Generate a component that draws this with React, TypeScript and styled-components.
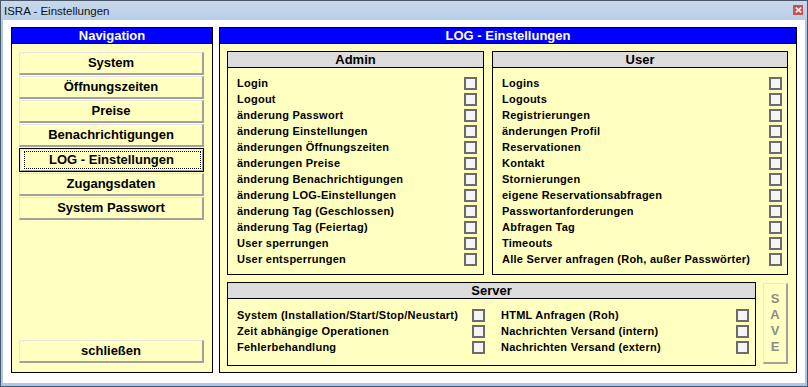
import React from "react";
import styled, { createGlobalStyle, css } from "styled-components";

const Global = createGlobalStyle`
  html, body { margin: 0; padding: 0; background: #fff; }
  body { font-family: "Liberation Sans", Arial, sans-serif; }
  * { box-sizing: border-box; }
`;

const YELLOW = "#ffffc0";

const Window = styled.div`
  width: 808px;
  height: 387px;
  border: 1px solid #48576a;
  display: flex;
  flex-direction: column;
  background: #a8c7ea;
`;

const TitleBar = styled.div`
  height: 19px;
  flex: none;
  display: flex;
  align-items: center;
  padding: 0 4px 0 3px;
  background: linear-gradient(#c9d9ec, #b8cee8);
  font-family: "Liberation Sans", Arial, sans-serif;
  font-size: 11.5px;
  color: #101010;
`;

const TitleText = styled.span`
  flex: 1;
  padding-top: 1px;
`;

const CloseBtn = styled.div`
  width: 10px;
  height: 10px;
  margin-top: -2px;
  background: #c9504f;
  display: flex;
  align-items: center;
  justify-content: center;
`;

const Frame = styled.div`
  flex: 1;
  display: flex;
  padding: 0 2px 3px 2px;
  min-height: 0;
`;

const Content = styled.div`
  flex: 1;
  background: #fff;
  display: flex;
  gap: 6px;
  padding: 7px 8px 10px 8px;
`;

const Panel = styled.div<{ $width?: number }>`
  ${(p) => (p.$width ? css`width: ${p.$width}px; flex: none;` : css`flex: 1;`)}
  border: 1px solid #000;
  background: ${YELLOW};
  display: flex;
  flex-direction: column;
`;

const PanelHeader = styled.div`
  height: 16px;
  flex: none;
  background: #0000ff;
  border-bottom: 1px solid #000;
  color: #fff;
  font-weight: bold;
  font-size: 13px;
  line-height: 15px;
  text-align: center;
`;

const NavBody = styled.div`
  flex: 1;
  display: flex;
  flex-direction: column;
  gap: 1px;
  padding: 8px 8px 9px 7px;
`;

const NavButton = styled.div<{ $active?: boolean; $bottom?: boolean }>`
  position: relative;
  height: 23px;
  flex: none;
  background: ${YELLOW};
  border-style: solid;
  border-width: 1px 2px 2px 1px;
  border-color: #e4e4e4 #a0a0a0 #a0a0a0 #e4e4e4;
  font-weight: bold;
  font-size: 13px;
  line-height: 20px;
  text-align: center;
  color: #000;
  ${(p) => p.$bottom && css`margin-top: auto;`}
  ${(p) =>
    p.$active &&
    css`
      height: 24px;
      border: 1px solid #000;
      box-shadow: inset 1px 1px 0 #e4e4e4, inset -1px -1px 0 #a0a0a0;
      line-height: 22px;
      &::after {
        content: "";
        position: absolute;
        left: 4px;
        right: 2px;
        top: 2px;
        bottom: 2px;
        border: 1px dotted #000;
      }
    `}
`;

const RightBody = styled.div`
  flex: 1;
  display: flex;
  flex-direction: column;
  gap: 7px;
  padding: 7px 8px 6px 7px;
`;

const TopRow = styled.div`
  height: 224px;
  flex: none;
  display: flex;
  gap: 8px;
`;

const BottomRow = styled.div`
  flex: 1;
  display: flex;
  gap: 7px;
`;

const GroupBox = styled.div<{ $width?: number }>`
  ${(p) => (p.$width ? css`width: ${p.$width}px; flex: none;` : css`flex: 1;`)}
  border: 1px solid #000;
  background: ${YELLOW};
  display: flex;
  flex-direction: column;
`;

const GroupHeader = styled.div`
  height: 16px;
  flex: none;
  background: #dcdcdc;
  border-bottom: 1px solid #000;
  font-weight: bold;
  font-size: 13px;
  line-height: 15px;
  text-align: center;
  color: #000;
`;

const Rows = styled.div<{ $right: number; $top: number }>`
  display: flex;
  flex-direction: column;
  padding: ${(p) => p.$top}px ${(p) => p.$right}px 0 9px;
`;

const ServerGrid = styled.div`
  display: grid;
  grid-template-columns: 248px 248px;
  column-gap: 16px;
  padding: 8px 5px 0 9px;
`;

const ServerCol = styled.div`
  display: flex;
  flex-direction: column;
`;

const Row = styled.div`
  height: 16px;
  display: flex;
  align-items: center;
  justify-content: space-between;
`;

const Label = styled.span`
  font-weight: bold;
  font-size: 11px;
  letter-spacing: 0.25px;
  color: #000;
  white-space: nowrap;
`;

const Check = styled.span`
  width: 13px;
  height: 13px;
  flex: none;
  border: 2px solid #6b6b6b;
  background: #f4f4f4;
`;

const SaveButton = styled.div`
  width: 25px;
  height: 81px;
  margin-top: 1px;
  flex: none;
  background: ${YELLOW};
  border-style: solid;
  border-width: 1px 2px 2px 1px;
  border-color: #e4e4e4 #a0a0a0 #a0a0a0 #e4e4e4;
  display: flex;
  flex-direction: column;
  align-items: center;
  justify-content: center;
  color: #8c8c8c;
  font-weight: bold;
  font-size: 13px;
  line-height: 16px;
`;

const adminItems = [
  "Login",
  "Logout",
  "änderung Passwort",
  "änderung Einstellungen",
  "änderungen Öffnungszeiten",
  "änderungen Preise",
  "änderung Benachrichtigungen",
  "änderung LOG-Einstellungen",
  "änderung Tag (Geschlossen)",
  "änderung Tag (Feiertag)",
  "User sperrungen",
  "User entsperrungen",
];

const userItems = [
  "Logins",
  "Logouts",
  "Registrierungen",
  "änderungen Profil",
  "Reservationen",
  "Kontakt",
  "Stornierungen",
  "eigene Reservationsabfragen",
  "Passwortanforderungen",
  "Abfragen Tag",
  "Timeouts",
  "Alle Server anfragen (Roh, außer Passwörter)",
];

const serverLeft = [
  "System (Installation/Start/Stop/Neustart)",
  "Zeit abhängige Operationen",
  "Fehlerbehandlung",
];

const serverRight = [
  "HTML Anfragen (Roh)",
  "Nachrichten Versand (intern)",
  "Nachrichten Versand (extern)",
];

const navItems = [
  "System",
  "Öffnungszeiten",
  "Preise",
  "Benachrichtigungen",
  "LOG - Einstellungen",
  "Zugangsdaten",
  "System Passwort",
];

const CheckRow = ({ label }: { label: string }) => (
  <Row>
    <Label>{label}</Label>
    <Check />
  </Row>
);

export default function App() {
  return (
    <>
      <Global />
      <Window>
        <TitleBar>
          <TitleText>ISRA - Einstellungen</TitleText>
          <CloseBtn>
            <svg width="7" height="6" viewBox="0 0 7 6">
              <path d="M0.8 0.6 L6.2 5.4 M6.2 0.6 L0.8 5.4" stroke="#fff" strokeWidth="1.6" />
            </svg>
          </CloseBtn>
        </TitleBar>
        <Frame>
          <Content>
            <Panel $width={202}>
              <PanelHeader>Navigation</PanelHeader>
              <NavBody>
                {navItems.map((n) => (
                  <NavButton key={n} $active={n === "LOG - Einstellungen"}>
                    {n}
                  </NavButton>
                ))}
                <NavButton $bottom>schließen</NavButton>
              </NavBody>
            </Panel>
            <Panel>
              <PanelHeader>LOG - Einstellungen</PanelHeader>
              <RightBody>
                <TopRow>
                  <GroupBox $width={257}>
                    <GroupHeader>Admin</GroupHeader>
                    <Rows $right={6} $top={7}>
                      {adminItems.map((i) => (
                        <CheckRow key={i} label={i} />
                      ))}
                    </Rows>
                  </GroupBox>
                  <GroupBox>
                    <GroupHeader>User</GroupHeader>
                    <Rows $right={5} $top={7}>
                      {userItems.map((i) => (
                        <CheckRow key={i} label={i} />
                      ))}
                    </Rows>
                  </GroupBox>
                </TopRow>
                <BottomRow>
                  <GroupBox>
                    <GroupHeader>Server</GroupHeader>
                    <ServerGrid>
                      <ServerCol>
                        {serverLeft.map((i) => (
                          <CheckRow key={i} label={i} />
                        ))}
                      </ServerCol>
                      <ServerCol>
                        {serverRight.map((i) => (
                          <CheckRow key={i} label={i} />
                        ))}
                      </ServerCol>
                    </ServerGrid>
                  </GroupBox>
                  <SaveButton>
                    <span>S</span>
                    <span>A</span>
                    <span>V</span>
                    <span>E</span>
                  </SaveButton>
                </BottomRow>
              </RightBody>
            </Panel>
          </Content>
        </Frame>
      </Window>
    </>
  );
}
